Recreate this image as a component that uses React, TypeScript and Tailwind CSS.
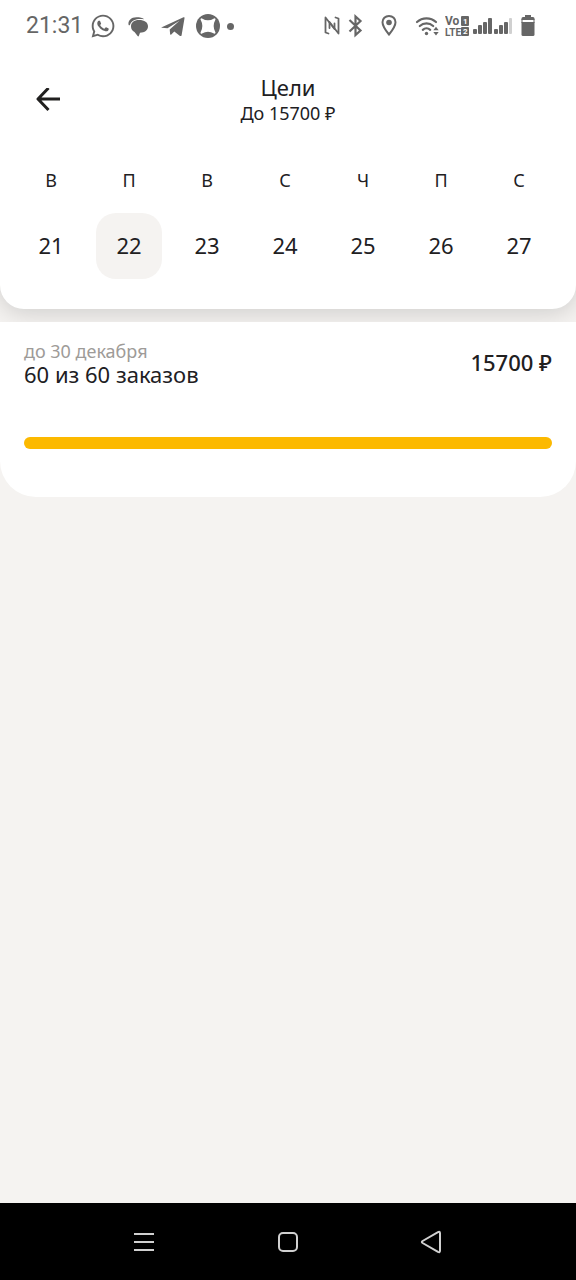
import clsx from "clsx"
import { FaWhatsapp } from "react-icons/fa"

type Day = {
    weekday: string
    date: number
}

type Goal = {
    deadline: string
    done: number
    total: number
    reward: string
}

const days: Day[] = [
    { weekday: "В", date: 21 },
    { weekday: "П", date: 22 },
    { weekday: "В", date: 23 },
    { weekday: "С", date: 24 },
    { weekday: "Ч", date: 25 },
    { weekday: "П", date: 26 },
    { weekday: "С", date: 27 },
]

const selectedDate = 22

const goal: Goal = {
    deadline: "до 30 декабря",
    done: 60,
    total: 60,
    reward: "15700 ₽",
}

function ChatIcon() {
    return (
        <svg viewBox="0 0 24 24" className="size-6" fill="currentColor">
            <path d="M2.500 10.500C2 6.500 5 3.200 10.500 3.200c3.500 0 6 .6 7.700 2C12 4.500 6 5 4 10.800c-.300.900-1.300.700-1.500-.3Z" />
            <path d="M5 12.500C5 8.500 8 6 13 6c5.500 0 9 2.300 9 6.300 0 4-3.300 6.400-8 6.500L12.800 22c-.2.600-.8.600-1.200.1L8.500 18C6.300 17 5 15 5 12.500Z" />
        </svg>
    )
}

function TelegramIcon() {
    return (
        <svg viewBox="0 0 24 24" className="size-6" fill="currentColor">
            <path d="M.8 13.200 22.500 3.300c.700-.300 1.200.100 1 .900l-2.900 17c-.200.900-.900 1.100-1.600.700l-5.700-4.300-3 2.800c-.600.500-1.100.400-1.200-.400l-.400-4.600L18.500 6.800 6.500 14.300l-5.500-.5c-.700-.100-.800-.400-.200-.600Z" />
        </svg>
    )
}

function CrossCircleIcon() {
    return (
        <svg viewBox="0 0 24 24" className="size-6">
            <circle cx="12" cy="12" r="12" fill="currentColor" />
            <path
                d="M5.500 5.300Q12 9.300 18.500 5.300 14.800 12 18.500 18.700 12 14.700 5.500 18.700 9.200 12 5.500 5.300Z"
                fill="#fff"
                stroke="#fff"
                strokeWidth="2"
                strokeLinejoin="round"
            />
        </svg>
    )
}

function NfcIcon() {
    return (
        <svg
            viewBox="0 0 24 24"
            className="size-6"
            fill="none"
            stroke="currentColor"
            strokeWidth="1.800"
            strokeLinecap="round"
            strokeLinejoin="round"
        >
            <path d="M7.500 19.500 4.500 18.500V3.500L13.500 15V9.500" />
            <path d="M14.500 3.500 17.500 4.500v15L8.500 8v6" />
        </svg>
    )
}

function BluetoothIcon() {
    return (
        <svg
            viewBox="0 0 24 24"
            className="size-6"
            fill="none"
            stroke="currentColor"
            strokeWidth="2.200"
        >
            <path d="m4.500 6 11 10.500L10.500 21V2.500l5 4.500-11 10.500" />
        </svg>
    )
}

function PinIcon() {
    return (
        <svg viewBox="0 0 24 24" className="size-6">
            <path
                d="M12 2C8.200 2 5.500 4.700 5.500 8.200 5.500 12.500 12 20.500 12 20.500s6.500-8 6.500-12.300C18.500 4.700 15.800 2 12 2Z"
                fill="none"
                stroke="currentColor"
                strokeWidth="2"
            />
            <circle cx="12" cy="8.500" r="2.800" fill="currentColor" />
        </svg>
    )
}

function WifiIcon() {
    return (
        <svg viewBox="0 0 24 24" className="size-6">
            <g
                fill="none"
                stroke="currentColor"
                strokeWidth="2.200"
                strokeLinecap="round"
            >
                <path d="M2 8a14 14 0 0 1 19 0" />
                <path d="M4.800 12a10 10 0 0 1 13.400 0" />
                <path d="M7.800 15.800a5.600 5.600 0 0 1 7.400 0" />
            </g>
            <circle cx="11.500" cy="19.500" r="1.700" fill="currentColor" />
            <path
                d="m18.300 16.300 2.700-3.500 2.700 3.500ZM18.300 18l2.700 3.500 2.700-3.500Z"
                fill="currentColor"
            />
        </svg>
    )
}

function VolteIcon() {
    return (
        <svg
            viewBox="0 0 24 24"
            className="size-6 font-['Roboto',sans-serif] font-bold"
            fill="currentColor"
        >
            <text x="0" y="11" fontSize="12">
                Vo
            </text>
            <text x="0" y="22" fontSize="10">
                LTE
            </text>
            <rect x="16" y="2" width="8" height="10" rx="1" />
            <rect x="16" y="13" width="8" height="9" rx="1" />
            <text x="18" y="10" fontSize="8" fill="#fff">
                1
            </text>
            <text x="18" y="20" fontSize="8" fill="#fff">
                2
            </text>
        </svg>
    )
}

function SignalIcon() {
    return (
        <svg viewBox="0 0 39 24" className="h-6 w-[39px]" fill="currentColor">
            <rect x="0" y="15" width="4" height="5" rx="1" />
            <rect x="5" y="11" width="4" height="9" rx="1" />
            <rect x="10" y="8" width="4" height="12" rx="1" />
            <rect x="15" y="4" width="4" height="16" rx="1" />
            <rect x="21" y="15" width="4" height="5" rx="1" />
            <rect x="26" y="11" width="4" height="9" rx="1" />
            <rect x="31" y="8" width="4" height="12" rx="1" />
            <rect x="36" y="4" width="3" height="16" rx="1" fill="#d0d0d0" />
        </svg>
    )
}

function BatteryIcon() {
    return (
        <svg viewBox="0 0 24 24" className="size-6" fill="currentColor">
            <path d="M9 1h6v2h2a1.500 1.500 0 0 1 1.500 1.500V6h-13V4.500A1.500 1.500 0 0 1 7 3h2Z" />
            <path d="M5.500 8h13v12.500A1.500 1.500 0 0 1 17 22H7a1.500 1.500 0 0 1-1.500-1.500Z" />
            <path d="M5.500 5h1v4h-1ZM17.500 5h1v4h-1Z" />
        </svg>
    )
}

function StatusBar() {
    return (
        <div className="flex h-[52px] items-center justify-between pr-9 pl-[26px] text-[#666666]">
            <div className="flex items-center gap-2">
                <span className="font-['Roboto',sans-serif] text-[23px]">
                    21:31
                </span>
                <div className="flex items-center gap-[11px]">
                    <FaWhatsapp className="-mx-px size-[26px]" />
                    <ChatIcon />
                    <TelegramIcon />
                    <CrossCircleIcon />
                    <span className="-ml-1 size-[7px] rounded-full bg-current" />
                </div>
            </div>
            <div className="flex items-center">
                <NfcIcon />
                <BluetoothIcon />
                <span className="ml-2">
                    <PinIcon />
                </span>
                <span className="ml-3.5">
                    <WifiIcon />
                </span>
                <span className="ml-1.5">
                    <VolteIcon />
                </span>
                <span className="ml-1">
                    <SignalIcon />
                </span>
                <span className="ml-1">
                    <BatteryIcon />
                </span>
            </div>
        </div>
    )
}

function Header() {
    return (
        <header className="grid h-24 grid-cols-[48px_1fr_48px] items-center px-6">
            <button
                type="button"
                aria-label="Назад"
                className="flex size-12 items-center justify-center"
            >
                <svg
                    viewBox="0 0 24 24"
                    className="size-6"
                    fill="none"
                    stroke="currentColor"
                    strokeWidth="3"
                    strokeLinejoin="round"
                >
                    <path d="M24 11H2M12.500 0 2 11l10.500 11" />
                </svg>
            </button>
            <div className="text-center">
                <h1 className="text-[22px] leading-[26px]">Цели</h1>
                <p className="text-[18px] leading-[26px]">До {goal.reward}</p>
            </div>
        </header>
    )
}

function WeekStrip() {
    return (
        <div className="grid grid-cols-7 pr-[18px] pb-[30px] pl-3">
            {days.map((day) => (
                <div key={day.date} className="flex flex-col items-center">
                    <span className="flex h-[65px] items-center text-[18px]">
                        {day.weekday}
                    </span>
                    <button
                        type="button"
                        className={clsx(
                            "size-[66px] rounded-[20px] pb-0.5 text-[22px]",
                            day.date === selectedDate && "bg-[#f5f3f1]"
                        )}
                    >
                        {day.date}
                    </button>
                </div>
            ))}
        </div>
    )
}

function GoalCard() {
    const percent = (goal.done / goal.total) * 100

    return (
        <section className="relative mt-[13px] rounded-b-[36px] bg-white px-6 pt-[18px] pb-12">
            <div className="flex items-center justify-between">
                <div className="leading-[23px]">
                    <p className="text-[18px] text-[#9e9b98]">
                        {goal.deadline}
                    </p>
                    <p className="text-[22px]">
                        {goal.done} из {goal.total} заказов
                    </p>
                </div>
                <span className="pb-0.5 text-[22px] font-medium">
                    {goal.reward}
                </span>
            </div>
            <div
                role="progressbar"
                aria-label="Выполнено заказов"
                aria-valuenow={goal.done}
                aria-valuemax={goal.total}
                className="mt-[51px] h-3 rounded-full bg-[#f5f3f1]"
            >
                <div
                    className="h-full rounded-full bg-[#fcb900]"
                    style={{ width: `${percent}%` }}
                />
            </div>
        </section>
    )
}

function NavigationBar() {
    return (
        <nav className="h-[77px] bg-black text-[#d0d0d0]">
            <div className="mx-auto grid h-full w-3/4 grid-cols-3 place-items-center">
                <button type="button" aria-label="Меню">
                    <svg
                        viewBox="0 0 24 24"
                        className="size-6"
                        fill="none"
                        stroke="currentColor"
                        strokeWidth="2"
                    >
                        <path d="M2 4h20M2 12h20M2 20h20" />
                    </svg>
                </button>
                <button type="button" aria-label="Домой">
                    <svg
                        viewBox="0 0 24 24"
                        className="size-6"
                        fill="none"
                        stroke="currentColor"
                        strokeWidth="2"
                    >
                        <rect x="3" y="3" width="18" height="18" rx="4" />
                    </svg>
                </button>
                <button type="button" aria-label="Назад">
                    <svg
                        viewBox="0 0 24 24"
                        className="size-6"
                        fill="none"
                        stroke="currentColor"
                        strokeWidth="2"
                        strokeLinejoin="round"
                    >
                        <path d="M2.600 11 18 2.200q2-1 2 1V20.800q0 2-2 1L2.600 13q-1.500-1 0-2Z" />
                    </svg>
                </button>
            </div>
        </nav>
    )
}

export default function App() {
    return (
        <div className="flex min-h-screen flex-col bg-[#f5f3f1] font-['Noto_Sans',sans-serif] text-[#21201f]">
            <div className="rounded-b-[24px] bg-white shadow-[0_4px_24px_rgba(0,0,0,0.16)]">
                <StatusBar />
                <Header />
                <WeekStrip />
            </div>
            <main className="flex-1">
                <GoalCard />
            </main>
            <NavigationBar />
        </div>
    )
}
